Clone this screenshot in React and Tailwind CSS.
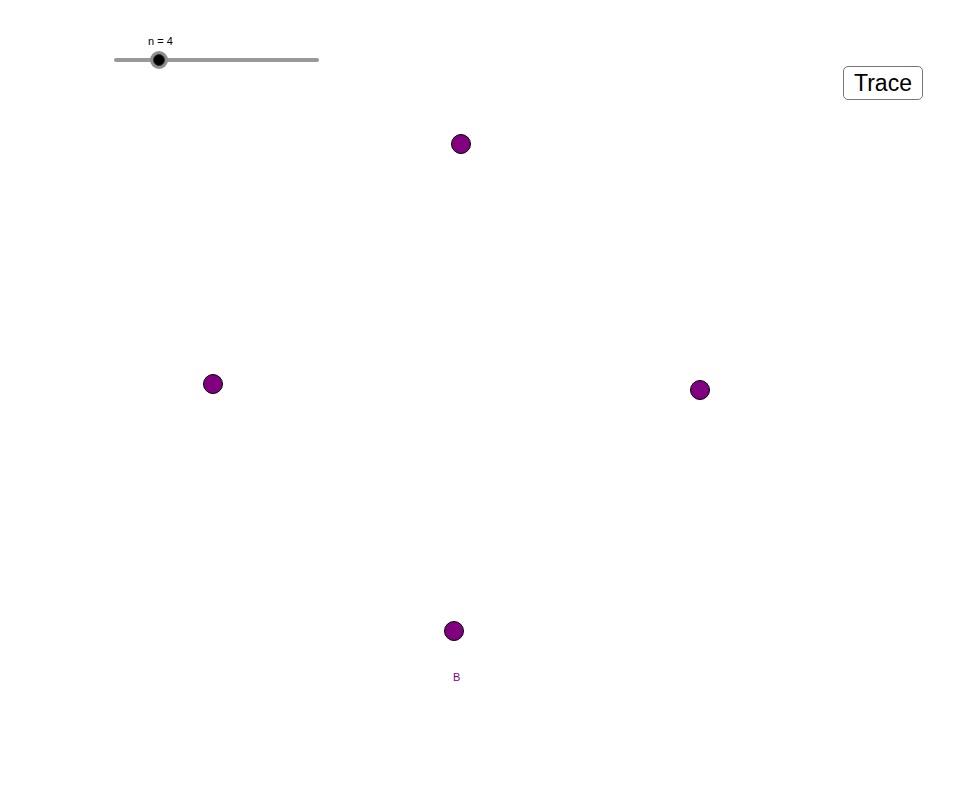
export default function App() {
  const points = [
    { x: 460.5, y: 144 },
    { x: 213, y: 384 },
    { x: 700, y: 390 },
    { x: 454, y: 631 },
  ];

  return (
    <div className="relative w-[979px] h-[796px] bg-white overflow-hidden font-['Liberation_Sans',Arial,sans-serif]">
      {/* slider n */}
      <div className="absolute left-[148px] top-[35px] text-[11px] leading-[13px] text-black">n = 4</div>
      <div className="absolute left-[114px] top-[58px] w-[205px] h-[4px] rounded-full bg-[#999999]" />
      <div className="absolute left-[150px] top-[51px] w-[18px] h-[18px] rounded-full bg-[#8f8f8f] flex items-center justify-center">
        <div className="w-[12px] h-[12px] rounded-full bg-black border border-[#333]" />
      </div>

      {/* Trace button */}
      <button className="absolute left-[843px] top-[66px] w-[80px] h-[34px] rounded-[5px] border border-[#777] bg-white text-[23px] leading-none text-black flex items-center justify-center">
        Trace
      </button>

      {/* points */}
      {points.map((p, i) => (
        <div
          key={i}
          className="absolute w-[20px] h-[20px] rounded-full bg-[#800080] border border-black"
          style={{ left: p.x - 10, top: p.y - 10 }}
        />
      ))}
      <div className="absolute left-[453px] top-[671px] text-[11px] leading-[12px] text-[#800080]">B</div>
    </div>
  );
}
